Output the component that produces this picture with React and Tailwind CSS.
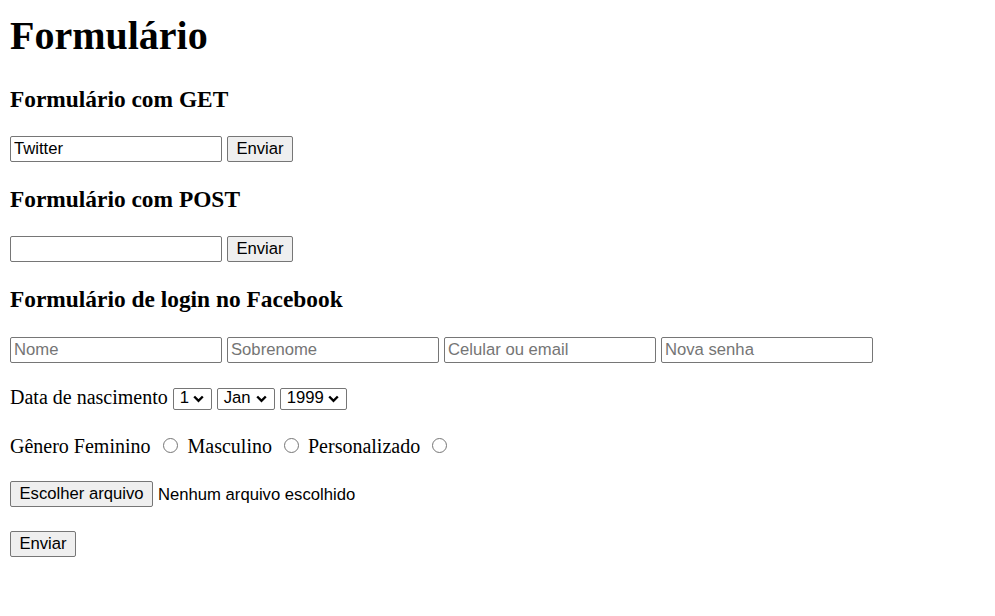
import React from "react";

const sans = "font-['Liberation_Sans',Arial,sans-serif]";

function TextInput({ value, placeholder }) {
  return (
    <input
      type="text"
      defaultValue={value}
      placeholder={placeholder}
      className={`${sans} w-[212px] h-[26px] shrink-0 border border-[#767676] rounded-[2px] bg-white px-[3px] text-[16.67px] text-black placeholder:text-[#757575] outline-none`}
    />
  );
}

function Btn({ children, w }) {
  return (
    <button
      type="button"
      className={`${sans} ${w} h-[26px] shrink-0 border border-[#767676] rounded-[2px] bg-[#efefef] text-[16.67px] leading-[22px] text-black text-center`}
    >
      {children}
    </button>
  );
}

function Select({ label, w }) {
  return (
    <div
      className={`${sans} ${w} h-[22px] shrink-0 flex items-start justify-between border border-[#767676] rounded-[2px] bg-white pl-[6px] pr-[7px] text-[16.67px] leading-[18px] text-black`}
    >
      <span>{label}</span>
      <svg width="11" height="8" viewBox="0 0 11 8" className="mt-[6px] shrink-0">
        <path d="M1.2 1.5 L5.5 5.8 L9.8 1.5" fill="none" stroke="#000" strokeWidth="2.4" />
      </svg>
    </div>
  );
}

function Radio({ ml, mr }) {
  return (
    <span
      className={`inline-block shrink-0 w-[15px] h-[15px] rounded-full border border-[#767676] bg-white ${ml} ${mr} mb-[1px]`}
    />
  );
}

export default function App() {
  return (
    <div className="bg-white min-h-[616px] pl-[10px] font-['Liberation_Serif','Times_New_Roman',serif] text-black overflow-hidden">
      <h1 className="pt-[16px] h-[56px] text-[40px] leading-[40px] font-bold">Formulário</h1>

      <h3 className="mt-[31px] h-[24px] text-[23.4px] leading-[24px] font-bold">Formulário com GET</h3>
      <div className="mt-[25px] flex gap-[5px] h-[26px]">
        <TextInput value="Twitter" />
        <Btn w="w-[66px]">Enviar</Btn>
      </div>

      <h3 className="mt-[25px] h-[24px] text-[23.4px] leading-[24px] font-bold">Formulário com POST</h3>
      <div className="mt-[25px] flex gap-[5px] h-[26px]">
        <TextInput />
        <Btn w="w-[66px]">Enviar</Btn>
      </div>

      <h3 className="mt-[25px] h-[24px] text-[23.4px] leading-[24px] font-bold">Formulário de login no Facebook</h3>
      <div className="mt-[26px] flex gap-[5px] h-[26px]">
        <TextInput placeholder="Nome" />
        <TextInput placeholder="Sobrenome" />
        <TextInput placeholder="Celular ou email" />
        <TextInput placeholder="Nova senha" />
      </div>

      <div className="mt-[25px] flex items-start gap-[5px] h-[22px]">
        <span className="text-[20px] leading-[18px]">Data de nascimento</span>
        <Select label="1" w="w-[39px]" />
        <Select label="Jan" w="w-[58px]" />
        <Select label="1999" w="w-[67px]" />
      </div>

      <div className="mt-[26px] flex items-baseline h-[20px] text-[20px] leading-[20px]">
        <span>Gênero Feminino</span>
        <Radio ml="ml-[12px]" mr="mr-[10px]" />
        <span>Masculino</span>
        <Radio ml="ml-[12px]" mr="mr-[9px]" />
        <span>Personalizado</span>
        <Radio ml="ml-[12px]" mr="mr-[0px]" />
      </div>

      <div className="mt-[25px] flex items-center gap-[5px] h-[26px]">
        <Btn w="w-[143px]">Escolher arquivo</Btn>
        <span className={`${sans} text-[16.67px]`}>Nenhum arquivo escolhido</span>
      </div>

      <div className="mt-[24px] flex h-[26px]">
        <Btn w="w-[66px]">Enviar</Btn>
      </div>
    </div>
  );
}
